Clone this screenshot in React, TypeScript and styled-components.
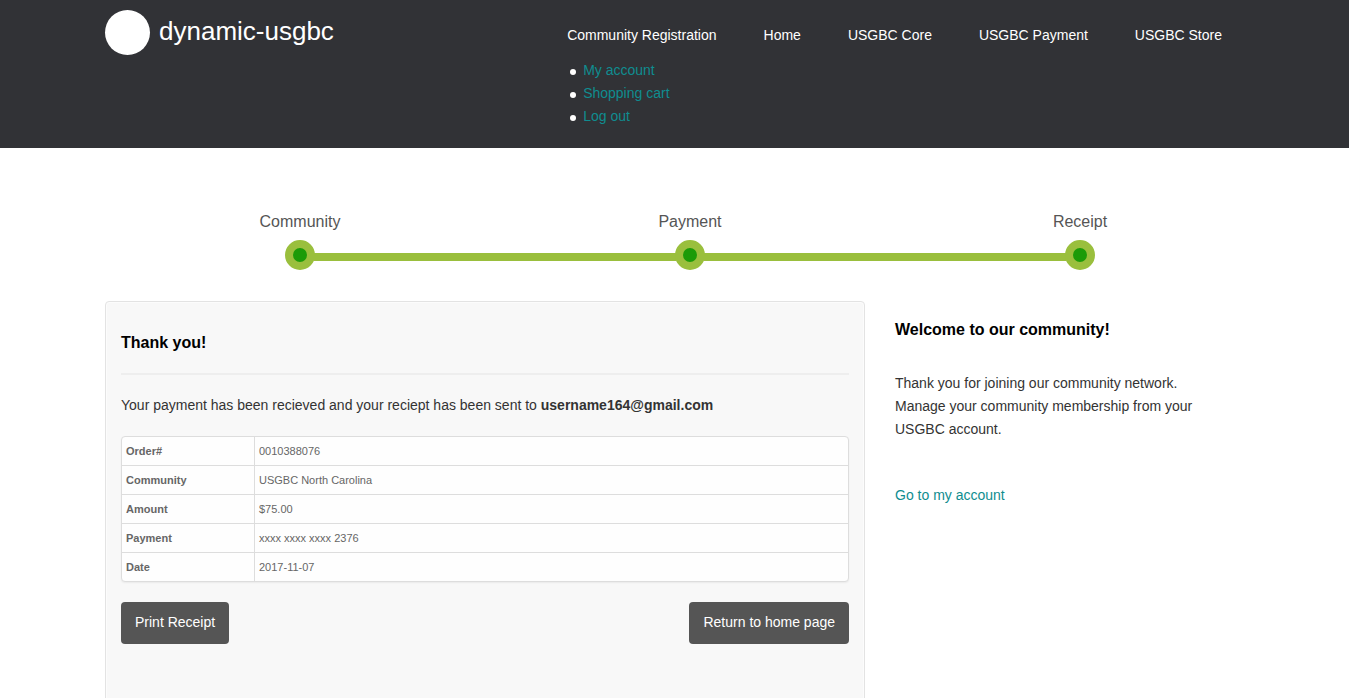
import React from "react";
import styled, { createGlobalStyle } from "styled-components";

const GlobalStyle = createGlobalStyle`
  *, *::before, *::after { box-sizing: border-box; }
  body {
    margin: 0;
    overflow-x: hidden;
    background: #fff;
    color: #333;
    font: 14px/23px "Liberation Sans", Arial, sans-serif;
  }
  h1, h2, p, ul, ol { margin: 0; padding: 0; }
`;

const Container = styled.div`
  max-width: 1139px;
  margin: 0 auto;
`;

const Header = styled.header`
  background: #313236;
`;

const HeaderInner = styled(Container)`
  display: flex;
  justify-content: space-between;
  align-items: flex-start;
  padding-bottom: 20px;
`;

const Brand = styled.a`
  display: flex;
  align-items: center;
  gap: 9px;
  padding-top: 10px;
  color: #fff;
  text-decoration: none;
`;

const Logo = styled.span`
  width: 45px;
  height: 45px;
  border-radius: 50%;
  background: #fff;
`;

const BrandName = styled.span`
  padding-bottom: 4px;
  font-size: 26px;
  line-height: 30px;
`;

const HeaderMenus = styled.div`
  display: flex;
  flex-direction: column;
  gap: 12px;
  padding: 24px 22px 0 0;
`;

const MainNav = styled.nav`
  display: flex;
  gap: 47px;
`;

const NavLink = styled.a`
  color: #fff;
  text-decoration: none;
`;

const AccountMenu = styled.ul`
  padding-left: 3px;
  list-style: none;
`;

const AccountItem = styled.li`
  display: flex;
  align-items: center;
  gap: 7px;

  &::before {
    content: "";
    width: 6px;
    height: 6px;
    margin-top: 2px;
    border-radius: 50%;
    background: #fff;
  }
`;

const TextLink = styled.a`
  color: #0f8d90;
  text-decoration: none;
`;

const Steps = styled.ol`
  display: flex;
  margin: 62px -31px 0 0;
  list-style: none;
`;

const Step = styled.li`
  flex: 1;
  display: flex;
  flex-direction: column;
  gap: 7px;
  color: #555;
  font-size: 16px;
  text-align: center;
`;

const Track = styled.div`
  display: flex;
  align-items: center;
`;

const Bar = styled.span<{ $visible: boolean }>`
  flex: 1;
  height: 8px;
  margin: 4px -1px 0;
  background: ${(p) => (p.$visible ? "#9abf3d" : "transparent")};
`;

const Dot = styled.span`
  width: 30px;
  height: 30px;
  border: 8px solid #9abf3d;
  border-radius: 50%;
  background: #1c9b08;
`;

const Columns = styled.main`
  display: grid;
  grid-template-columns: minmax(0, 760px) minmax(0, 1fr);
  margin-top: 31px;
`;

const Panel = styled.section`
  padding: 29px 15px 80px;
  border: 1px solid #e3e3e3;
  border-radius: 4px;
  background: #f8f8f8;
  box-shadow: inset 0 0 0 1px #fcfcfc;
`;

const Heading = styled.h2`
  color: #000;
  font-size: 16px;
  font-weight: bold;
  line-height: 23px;
`;

const PanelHeading = styled(Heading)`
  padding-bottom: 19px;
  border-bottom: 2px solid #eee;
`;

const Notice = styled.p`
  padding: 19px 0;
`;

const ReceiptTable = styled.table`
  width: 100%;
  border: 1px solid #ddd;
  border-radius: 4px;
  border-spacing: 0;
  background: #fefefe;
  box-shadow: 0 1px 2px rgba(0, 0, 0, 0.06);
  color: #666;
  font-size: 11px;
  line-height: 18px;
  text-align: left;

  tr + tr > * {
    border-top: 1px solid #ddd;
  }
`;

const Label = styled.th`
  width: 132px;
  padding: 5px 4px;
`;

const Value = styled.td`
  padding: 5px 4px;
  border-left: 1px solid #ddd;
`;

const Actions = styled.div`
  display: flex;
  justify-content: space-between;
  margin-top: 20px;
`;

const Button = styled.button`
  padding: 9px 14px 10px;
  border: 0;
  border-radius: 4px;
  background: #555;
  color: #fff;
  font: inherit;
  cursor: pointer;
`;

const Sidebar = styled.aside`
  padding: 17px 30px 0;
`;

const SidebarText = styled.p`
  padding: 31px 0 43px;
`;

const navItems = ["Community Registration", "Home", "USGBC Core", "USGBC Payment", "USGBC Store"];
const accountItems = ["My account", "Shopping cart", "Log out"];
const steps = ["Community", "Payment", "Receipt"];
const receipt = [
  ["Order#", "0010388076"],
  ["Community", "USGBC North Carolina"],
  ["Amount", "$75.00"],
  ["Payment", "xxxx xxxx xxxx 2376"],
  ["Date", "2017-11-07"],
];

export default function App() {
  return (
    <>
      <GlobalStyle />
      <Header>
        <HeaderInner>
          <Brand href="#">
            <Logo />
            <BrandName>dynamic-usgbc</BrandName>
          </Brand>
          <HeaderMenus>
            <MainNav>
              {navItems.map((item) => (
                <NavLink href="#" key={item}>{item}</NavLink>
              ))}
            </MainNav>
            <AccountMenu>
              {accountItems.map((item) => (
                <AccountItem key={item}><TextLink href="#">{item}</TextLink></AccountItem>
              ))}
            </AccountMenu>
          </HeaderMenus>
        </HeaderInner>
      </Header>
      <Container>
        <Steps>
          {steps.map((step, i) => (
            <Step key={step}>
              {step}
              <Track>
                <Bar $visible={i > 0} />
                <Dot />
                <Bar $visible={i < steps.length - 1} />
              </Track>
            </Step>
          ))}
        </Steps>
        <Columns>
          <Panel>
            <PanelHeading>Thank you!</PanelHeading>
            <Notice>
              Your payment has been recieved and your reciept has been sent to{" "}
              <strong>username164@gmail.com</strong>
            </Notice>
            <ReceiptTable>
              <tbody>
                {receipt.map(([label, value]) => (
                  <tr key={label}>
                    <Label scope="row">{label}</Label>
                    <Value>{value}</Value>
                  </tr>
                ))}
              </tbody>
            </ReceiptTable>
            <Actions>
              <Button type="button">Print Receipt</Button>
              <Button type="button">Return to home page</Button>
            </Actions>
          </Panel>
          <Sidebar>
            <Heading>Welcome to our community!</Heading>
            <SidebarText>
              Thank you for joining our community network. Manage your community
              membership from your USGBC account.
            </SidebarText>
            <TextLink href="#">Go to my account</TextLink>
          </Sidebar>
        </Columns>
      </Container>
    </>
  );
}
